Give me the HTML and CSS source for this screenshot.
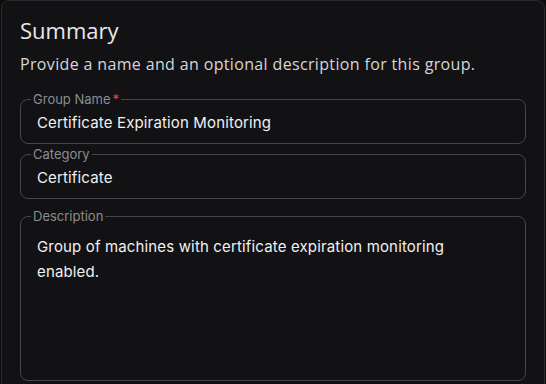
FILE: index.html
```html
<!doctype html>
<html lang="en">

<head>
  <meta charset="UTF-8" />
  <meta name="viewport" content="width=device-width, initial-scale=1.0" />
  <title>Summary</title>
  <link rel="stylesheet" href="styles.css">
</head>

<body>
  <div class="panel">
    <div class="header-section">
      <h1 class="title">Summary</h1>
      <p class="description">Provide a name and an optional description for this group.</p>
    </div>

    <form class="form">
      <fieldset class="field">
        <legend class="field-label">Group Name<span class="required">*</span></legend>
        <div class="field-value">Certificate Expiration Monitoring</div>
      </fieldset>

      <fieldset class="field">
        <legend class="field-label">Category</legend>
        <div class="field-value">Certificate</div>
      </fieldset>

      <fieldset class="field field-multiline">
        <legend class="field-label">Description</legend>
        <div class="field-value">Group of machines with certificate expiration monitoring enabled.</div>
      </fieldset>
    </form>
  </div>
</body>

</html>
```

FILE: styles.css
```css
* {
  margin: 0;
  padding: 0;
  box-sizing: border-box;
}

html,
body {
  height: 100%;
  width: 100%;
}

body {
  background-color: #0c0c0d;
  font-family: 'Inter', sans-serif;
  overflow: hidden;
}

.panel {
  margin: 0 1px;
  height: 420px;
  background-color: #121214;
  border: 1px solid #2a2a2d;
  border-radius: 8px;
  padding: 14px 18px 0;
}

.header-section {
  font-family: 'Open Sans', sans-serif;
}

.title {
  font-size: 22px;
  font-weight: 400;
  line-height: 30px;
  color: #e8e8ea;
}

.description {
  margin-top: 8px;
  font-size: 16px;
  line-height: 22px;
  letter-spacing: 0.35px;
  color: #d6d6d8;
}

.form {
  display: flex;
  flex-direction: column;
  margin-top: 16px;
}

.field {
  border: 1px solid #46464a;
  border-radius: 8px;
  padding: 0 16px 9px;
  margin-bottom: 2px;
}

.field-label {
  margin-left: -6px;
  padding: 0 2px;
  font-size: 13px;
  line-height: 16px;
  color: #8c8c90;
}

.required {
  color: #e5484d;
  margin-left: 2px;
}

.field-value {
  margin-top: 5px;
  font-size: 15px;
  line-height: 22px;
  letter-spacing: 0.15px;
  color: #f0f0f2;
}

.field-multiline {
  margin-top: 7px;
  height: 173px;
  padding: 5px 70px 0 16px;
}

.field-multiline .field-value {
  line-height: 25px;
}
```
